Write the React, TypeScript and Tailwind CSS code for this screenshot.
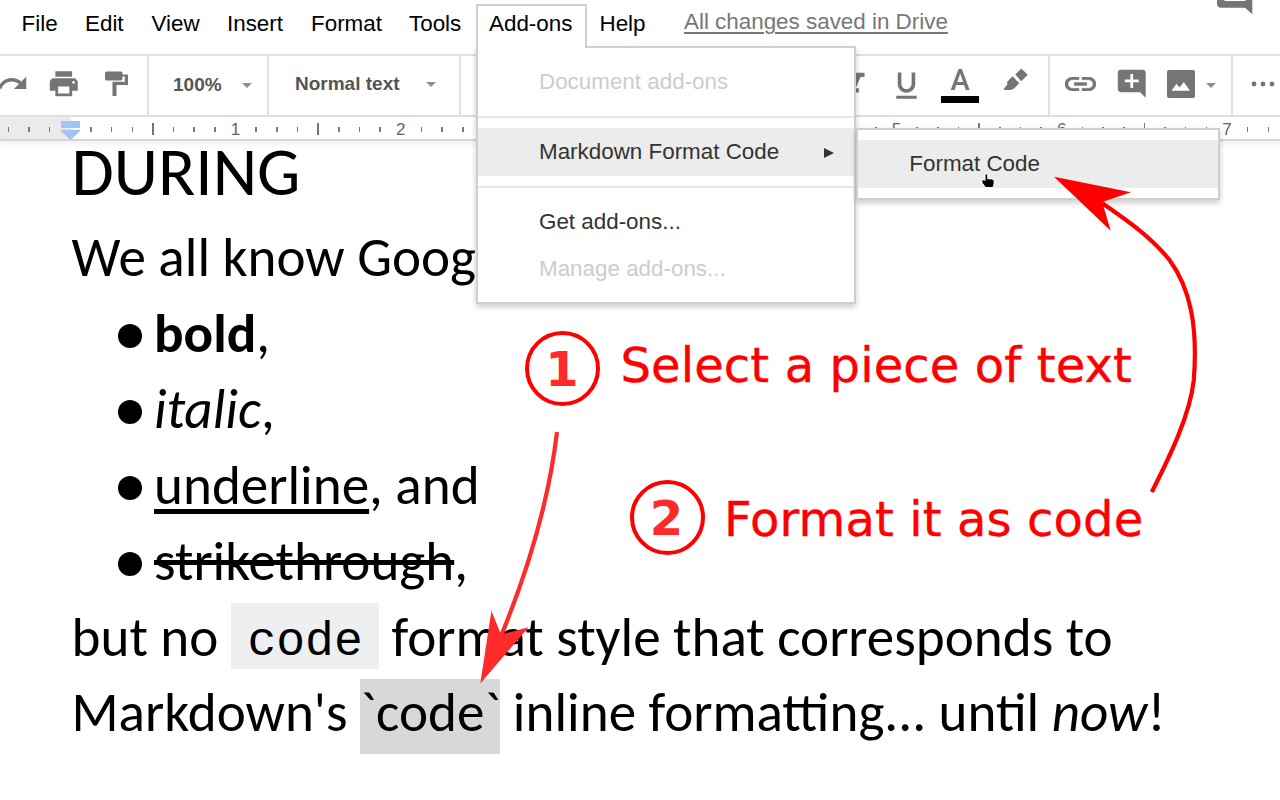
import type { ReactNode } from "react";
import { MdAddComment, MdFormatItalic, MdFormatUnderlined, MdPrint, MdRedo } from "react-icons/md";

const MENUS = [
  { label: "File", width: "w-[63.5px]" },
  { label: "Edit", width: "w-[66.5px]" },
  { label: "View", width: "w-[75.500px]" },
  { label: "Insert", width: "w-[84px]" },
  { label: "Format", width: "w-[98px]" },
  { label: "Tools", width: "w-[80px]" },
  { label: "Add-ons", width: "w-[110.500px]" },
  { label: "Help", width: "w-[84.5px]" },
];

function MenuBar() {
  return (
    <nav className="flex h-[54px] shrink-0 items-start pl-[21.5px] text-[22.4px] leading-[48px] text-black">
      {MENUS.map((m) => (
        <span key={m.label} className={`shrink-0 ${m.width}`}>
          {m.label}
        </span>
      ))}
      <span className="leading-[44px] text-[#777] underline decoration-[1.5px] underline-offset-[3px]">
        All changes saved in Drive
      </span>
      <svg className="ml-auto mr-[27.500px] h-[15px] w-[36px]" viewBox="0 0 36 15">
        <path d="M0 0v3.500q0 4.300 4.300 4.300H28l7.300 6.400V0z" fill="#757575" />
        <path d="M7.500 0h21v1h-21z" fill="#fff" />
      </svg>
    </nav>
  );
}

function Caret() {
  return (
    <svg className="h-[5px] w-[10px]" viewBox="0 0 10 5">
      <path d="M0 0h10L5 5z" fill="#8f8f8f" />
    </svg>
  );
}

function Toolbar() {
  return (
    <div className="flex h-[63px] shrink-0 overflow-hidden border-y-2 border-[#e0e0e0] text-[19px] font-bold text-[#555]">
      <div className="flex w-[149px] shrink-0 items-center border-r-2 border-[#e0e0e0] pb-[4px] text-[#757575]">
        <MdRedo className="-ml-1 size-[33px] shrink-0" />
        <MdPrint className="ml-[18px] size-[33.500px] shrink-0" />
        <svg className="ml-[24px] h-[26px] w-[24px]" viewBox="0 0 24 26" fill="currentColor">
          <path d="M1.500 0.500h14.500q1.500 0 1.500 1.500v1.500h5.500v10.500H11.500v11h-4V10.700h12.300V5.500h-2.300v2.300q0 1.700-1.500 1.700H1.500Q0 9.500 0 8V2Q0 .5 1.500 .5z" />
        </svg>
      </div>
      <div className="flex w-[120px] shrink-0 items-center border-r-2 border-[#e0e0e0] pl-6">
        <span className="w-[69px]">100%</span>
        <Caret />
      </div>
      <div className="flex w-[192px] shrink-0 items-center border-r-2 border-[#e0e0e0] pb-[2px] pl-[26px]">
        <span className="w-[131px]">Normal text</span>
        <Caret />
      </div>
      <div className="flex w-[589px] shrink-0 items-center border-r-2 border-[#e0e0e0] pb-[4px] pl-[378px] text-[#757575]">
        <MdFormatItalic className="size-[34px] shrink-0" />
        <MdFormatUnderlined className="ml-[15.500px] mt-1 size-[35px] shrink-0" />
        <span className="ml-[17.500px] flex w-[38px] shrink-0 flex-col items-center pt-[2px]">
          <span className="font-[Roboto] text-[29px] leading-[26px] font-medium">A</span>
          <span className="mt-[3px] h-[7px] w-[38px] bg-black" />
        </span>
        <svg className="ml-6 mb-[8px] h-[23px] w-[26px] shrink-0" viewBox="0 0 26 23" fill="currentColor">
          <path
            d="M18.300 1.500l5.500 5.300-5.500 5.400-5.100-5.700zM9.500 9.200l5.800 6-5 5-2.300 1H1.500l3.500-4.500-.2-2.500z"
            stroke="currentColor"
            strokeWidth="1.400"
            strokeLinejoin="round"
          />
        </svg>
      </div>
      <div className="flex w-[183px] shrink-0 items-center border-r-2 border-[#e0e0e0] pb-[4px] pl-[15px] text-[#757575]">
        <svg className="h-[14px] w-[31px] shrink-0" viewBox="2 7 20 10" preserveAspectRatio="none" fill="currentColor">
          <path
            d="M3.900 12c0-1.710 1.390-3.100 3.100-3.100h4V7H7c-2.760 0-5 2.240-5 5s2.240 5 5 5h4v-1.900H7c-1.710 0-3.100-1.390-3.100-3.100zM8 13h8v-2H8v2zm9-6h-4v1.900h4c1.710 0 3.100 1.390 3.100 3.100s-1.390 3.100-3.100 3.100h-4V17h4c2.760 0 5-2.240 5-5s-2.240-5-5-5z"
            stroke="currentColor"
            strokeWidth="0.300"
          />
        </svg>
        <MdAddComment className="ml-[19px] size-[33.500px] shrink-0" />
        <svg className="ml-[18.500px] size-[28px] shrink-0" viewBox="0 0 28 28">
          <rect width="28" height="28" rx="2" fill="currentColor" />
          <path d="M4.500 20.800l5-7 3 3.600L16.800 12l6.200 8.800z" fill="#fff" />
        </svg>
        <span className="ml-[11px] pt-[3px]">
          <Caret />
        </span>
      </div>
      <svg className="ml-[18px] mt-[24.500px] h-[6px] w-[26px] shrink-0" viewBox="0 0 26 6" fill="#757575">
        <circle cx="3" cy="3" r="2.400" />
        <circle cx="12" cy="3" r="2.400" />
        <circle cx="21" cy="3" r="2.400" />
      </svg>
    </div>
  );
}

const TICKS = Array.from({ length: 63 }, (_, i) => i - 3);

function Ruler() {
  return (
    <div className="relative z-10 h-[24px] shrink-0 overflow-visible border-b-2 border-[#d6d6d6] bg-white shadow-[0_3px_6px_rgba(0,0,0,0.06)]">
      <div className="h-full w-full overflow-hidden bg-[linear-gradient(to_right,#ebebeb_71px,#ffffff_71px)]">
        <div className="-ml-[2px] flex h-full items-center pt-[2px]">
          {TICKS.map((n) => (
            <span key={n} className="flex w-[20.67px] shrink-0 items-center justify-center text-[17px] leading-none text-[#666]">
              {n > 0 && n % 8 === 0 ? (
                n / 8
              ) : n === 0 ? null : n % 4 === 0 ? (
                <i className="h-[12px] w-[1.500px] bg-[#777]" />
              ) : (
                <i className="h-[5px] w-[1.500px] bg-[#777]" />
              )}
            </span>
          ))}
        </div>
      </div>
      <svg className="absolute left-[61px] top-[3.500px] h-[19px] w-[19px]" viewBox="0 0 19 19" fill="#a4c2f4">
        <path d="M0 0h19v7H0zM0 8.700h19v1.500L9.500 19 0 10.200z" />
      </svg>
    </div>
  );
}

function Bullet({ children }: { children: ReactNode }) {
  return (
    <li className="flex h-[75.8px] items-center">
      <span className="mt-[4px] mr-[12.5px] size-[24px] shrink-0 rounded-full bg-black" />
      {children}
    </li>
  );
}

function Document() {
  return (
    <main className="flex flex-col pl-[71.500px] font-[Carlito,Lato,sans-serif] text-[55.1px] leading-[75.8px] whitespace-nowrap text-black">
      <h1 className="mb-[17.200px] h-[62px] text-[68.800px] leading-[60px]">DURING</h1>
      <p>We all know Goog</p>
      <ul className="pl-[46px] pt-[0.500px]">
        <Bullet>
          <b>bold</b>,
        </Bullet>
        <Bullet>
          <i>italic</i>,
        </Bullet>
        <Bullet>
          <span className="underline decoration-[5px] underline-offset-[5px] [text-decoration-skip-ink:none]">underline</span>
          <span className="whitespace-pre">, and</span>
        </Bullet>
        <Bullet>
          <span className="line-through decoration-[5px]">strikethrough</span>,
        </Bullet>
      </ul>
      <p className="flex h-[75.8px]">
        <span className="w-[159.500px]">but no</span>
        <code className="mt-[3.500px] h-[66px] w-[148px] bg-[#eeeff1] pl-[16.500px] font-['Liberation_Mono'] text-[48px] leading-[78px]">
          code
        </code>
        <span className="ml-[12.500px]">format style that corresponds to</span>
      </p>
      <p className="h-[75.8px]">
        Markdown's <span className="bg-[#d8d8d8] pb-[8px]">`code`</span> inline formatting... until <i>now</i>!
      </p>
    </main>
  );
}

function AddonsMenu() {
  return (
    <div className="absolute left-[476px] top-[46px] z-20 w-[380.400px] border-2 border-[#cfcfcf] bg-white text-[22.4px] text-[#333] shadow-[0_3px_6px_rgba(0,0,0,0.2)]">
      <div className="absolute -left-[2px] -top-[44px] h-[44px] w-[110.500px] border-2 border-b-0 border-[#cfcfcf] bg-white pl-[11px] leading-[36px] text-black">
        Add-ons
      </div>
      <div className="absolute left-0 -top-[2px] h-[2px] w-[107px] bg-white" />
      <div className="flex h-[68px] items-center pl-[61px] text-[#ccc]">Document add-ons</div>
      <div className="mb-[10px] h-[2px] bg-[#e8e8e8]" />
      <div className="flex h-[48px] items-center bg-[#ececec] pl-[61px]">
        Markdown Format Code
        <svg className="ml-auto mr-[20px] mt-[2px] size-[10px]" viewBox="0 0 10 10">
          <path d="M0 0l10 5-10 5z" fill="#333" />
        </svg>
      </div>
      <div className="mt-[10px] mb-[10px] h-[2px] bg-[#e8e8e8]" />
      <div className="flex h-[48px] items-center pl-[61px]">Get add-ons...</div>
      <div className="mb-[10px] flex h-[46px] items-center pl-[61px] text-[#ccc]">Manage add-ons...</div>
    </div>
  );
}

function SubMenu() {
  return (
    <div className="absolute left-[856px] top-[128px] z-30 w-[364.400px] border-2 border-[#cfcfcf] bg-white py-[10px] text-[22.4px] leading-[48px] text-[#333] shadow-[0_3px_6px_rgba(0,0,0,0.2)]">
      <div className="bg-[#ececec] pl-[51.300px]">Format Code</div>
    </div>
  );
}

function Annotations() {
  return (
    <div className="pointer-events-none absolute inset-0 z-40 font-['DejaVu_Sans'] text-[48px] leading-[48px] whitespace-nowrap text-[#ff0000]">
      <svg className="absolute inset-0 h-[800px] w-[1280px]" viewBox="0 0 1280 800" fill="none">
        <path d="M557 432C549 500 528 570 501.500 635" stroke="#ff2a2a" strokeWidth="4.200" />
        <path d="M480.300 683.500L491.400 610.700 501 634.500 528.500 627.300z" fill="#ff2a2a" />
        <path
          d="M1151.800 492C1170 456 1190 415 1193.800 380C1198 325 1190 288 1169.500 260C1151 237 1128 221 1102 203"
          stroke="#f00"
          strokeWidth="4.200"
        />
        <path d="M1054 176.700L1131 192.300 1102 202 1104 208 1110.700 230.700z" fill="#f00" />
        <path
          d="M985.500 174.500h1.700v5l1.500-.8 1.500 1 1.300-.6 2.200 1.500v3l-1 3.400h-7l-3.300-4.200v-2.600h2l1.100 1z"
          fill="#000"
          stroke="#fff"
          strokeWidth="2"
          strokeLinejoin="round"
          paintOrder="stroke"
        />
      </svg>
      <div className="absolute left-[525px] top-[331px] flex size-[75px] items-center justify-center rounded-full border-4 border-[#ff0000]">
        <b className="-ml-[1px] text-[#ff2a2a]">1</b>
      </div>
      <div className="absolute left-[620.500px] top-[340.500px] tracking-[0.12px] [-webkit-text-stroke:0.4px_#ff0000]">
        Select a piece of text
      </div>
      <div className="absolute left-[630px] top-[480.400px] flex size-[75px] items-center justify-center rounded-full border-4 border-[#ff0000]">
        <b className="-ml-[2px] text-[#ff2a2a]">2</b>
      </div>
      <div className="absolute left-[724px] top-[494.600px] tracking-[0.12px] [-webkit-text-stroke:0.4px_#ff0000]">
        Format it as code
      </div>
    </div>
  );
}

export default function App() {
  return (
    <div className="relative flex h-[800px] w-[1280px] flex-col overflow-hidden bg-white font-['Liberation_Sans',Arial,sans-serif]">
      <MenuBar />
      <Toolbar />
      <Ruler />
      <Document />
      <AddonsMenu />
      <SubMenu />
      <Annotations />
    </div>
  );
}
